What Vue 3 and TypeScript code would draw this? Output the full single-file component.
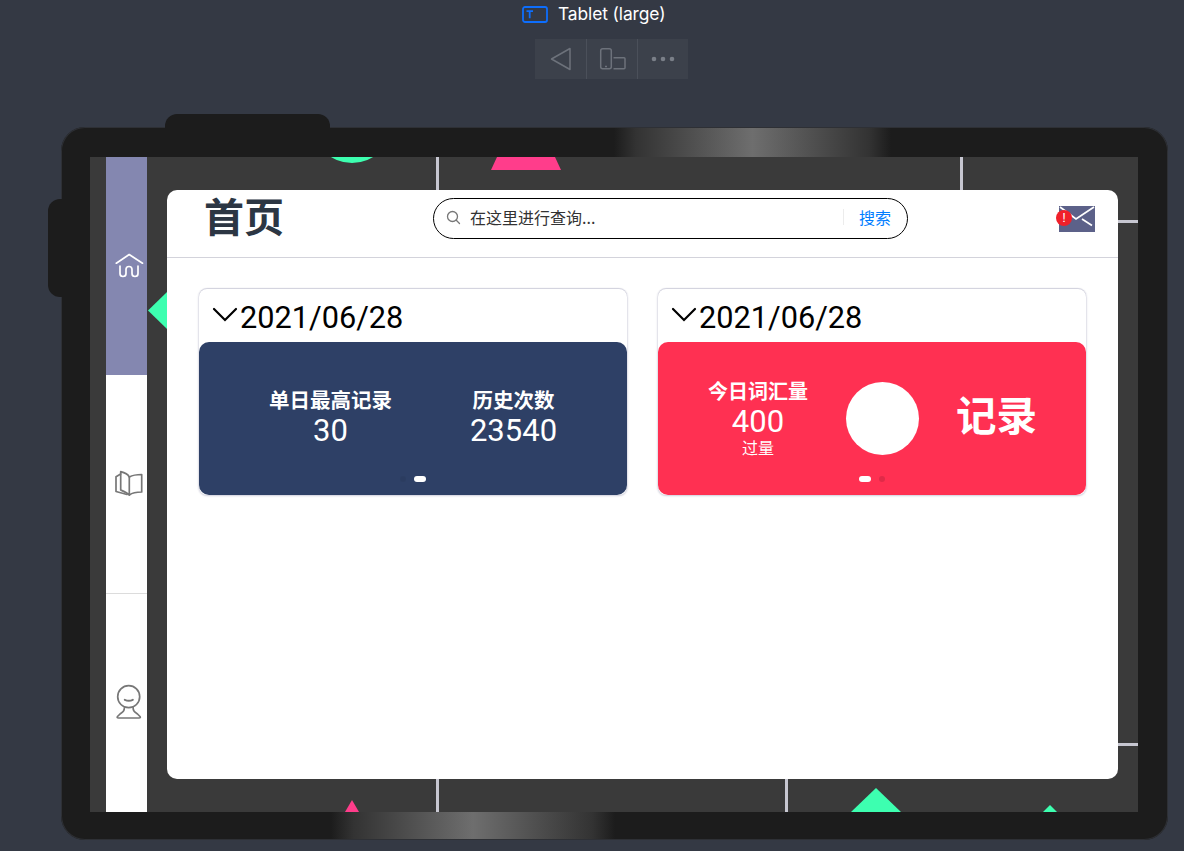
<script setup lang="ts">
const decorations: { cls: string }[] = [
  { cls: 'circle-top' }, { cls: 'tri-pink-top' }, { cls: 'line-v l1' }, { cls: 'line-v l2' },
  { cls: 'line-v l3' }, { cls: 'line-v l4' }, { cls: 'line-h h1' }, { cls: 'line-h h2' },
  { cls: 'tri-left' }, { cls: 'tri-pink-bottom' }, { cls: 'tri-big' }, { cls: 'tri-small' },
]
</script>

<template>
  <div class="page">
    <div class="title-row">
      <svg class="tablet-icon" width="26" height="17" viewBox="0 0 26 17">
        <rect x="1" y="1" width="24" height="15" rx="2" fill="none" stroke="#0d6efd" stroke-width="1.8" />
        <path d="M4.500 5.200h6.500M7.700 5.200v7" fill="none" stroke="#0d6efd" stroke-width="1.8" />
      </svg>
      <span class="title-text">Tablet (large)</span>
    </div>
    <div class="toolbar">
      <div class="tool">
        <svg width="24" height="26" viewBox="0 0 24 26"><path d="M21 2.500V23.500L2.500 13Z" fill="none" stroke="#6d727b" stroke-width="1.5" stroke-linejoin="round" /></svg>
      </div>
      <div class="tool">
        <svg width="28" height="24" viewBox="0 0 28 24"><rect x="2.700" y="1.700" width="10.600" height="20" rx="2" fill="none" stroke="#6d727b" stroke-width="1.5" /><path d="M7 19.600h2" stroke="#6d727b" stroke-width="1.5" /><path d="M15.500 10.700H26a1 1 0 0 1 1 1v9a1 1 0 0 1-1 1H15.500" fill="none" stroke="#6d727b" stroke-width="1.5" /></svg>
      </div>
      <div class="tool last">
        <svg width="26" height="6" viewBox="0 0 26 6"><circle cx="4" cy="3" r="2.300" fill="#7a7f88" /><circle cx="13" cy="3" r="2.300" fill="#7a7f88" /><circle cx="22" cy="3" r="2.300" fill="#7a7f88" /></svg>
      </div>
    </div>

    <div class="device">
      <div class="btn-top"></div>
      <div class="btn-left"></div>
      <div class="shine shine-top"></div>
      <div class="shine shine-bottom"></div>
      <div class="screen">
        <div v-for="d in decorations" :key="d.cls" :class="d.cls"></div>
        <nav class="rail">
          <div class="tab active">
            <svg width="30" height="30" viewBox="0 0 30 30" fill="none" stroke="#fff" stroke-width="1.7" stroke-linecap="round" stroke-linejoin="round">
              <path d="M2.300 12.200L15.200 3.500 28.500 12.200" />
              <path d="M6 15v7.500a3 3 0 0 0 3 3 3 3 0 0 0 3-3v-4a3 3 0 0 1 6 0v4a3 3 0 0 0 3 3 3 3 0 0 0 3-3V15" />
            </svg>
          </div>
          <div class="tab">
            <svg width="30" height="30" viewBox="0 0 30 30" fill="none" stroke="#777" stroke-width="1.7" stroke-linecap="round" stroke-linejoin="round">
              <path d="M15.300 8C18 6.500 23 5.500 27.700 5.500V23C23 23 18 24 15.300 26" />
              <path d="M6.700 2.700C10 3.500 14 5.500 15.300 8V26C13 23.500 9 22 6.700 21Z" />
              <path d="M6.700 5L2 7.700V22.500L13 25.500" />
            </svg>
          </div>
          <div class="tab">
            <svg width="30" height="38" viewBox="0 0 30 38" fill="none" stroke="#777" stroke-width="1.7" stroke-linecap="round" stroke-linejoin="round">
              <circle cx="14.700" cy="12.700" r="11" />
              <path d="M10.800 15.800q4 2 8 0" stroke-width="2" />
              <path d="M10.500 22.800C10.500 27 9 28 6 30L3.500 32.500Q2.500 34 4.500 34H25Q27 34 26 32.500L23.500 30C20.500 28 19 27 19 22.800" />
            </svg>
          </div>
        </nav>

        <main class="panel">
          <header class="panel-head">
            <h1 class="heading">首页</h1>
            <div class="search">
              <svg width="15" height="15" viewBox="0 0 15 15" fill="none" stroke="#777" stroke-width="1.300" stroke-linecap="round"><circle cx="6.500" cy="6.500" r="5" /><path d="M10.300 10.300l3.200 3.200" /></svg>
              <span class="placeholder">在这里进行查询...</span>
              <span class="search-sep"></span>
              <span class="search-btn">搜索</span>
            </div>
            <div class="mail">
              <svg width="36" height="26" viewBox="0 0 36 26">
                <rect width="36" height="26" fill="#5c6189" />
                <path d="M1 1L17 13L35 1M23 13L33 19.500" fill="none" stroke="#fff" stroke-width="1.700" />
              </svg>
              <span class="badge">!</span>
            </div>
          </header>

          <div class="cards">
            <section class="card">
              <div class="date">
                <svg width="26" height="16" viewBox="0 0 26 16" fill="none" stroke="#000" stroke-width="2.200" stroke-linecap="round"><path d="M2 2l11 11L24 2" /></svg>
                <span>2021/06/28</span>
              </div>
              <div class="body blue">
                <div class="stats-two">
                  <div class="stat">
                    <div class="label">单日最高记录</div>
                    <div class="value">30</div>
                  </div>
                  <div class="stat">
                    <div class="label">历史次数</div>
                    <div class="value">23540</div>
                  </div>
                </div>
                <div class="dots">
                  <span class="dot faint"></span><span class="dot on"></span>
                </div>
              </div>
            </section>

            <section class="card">
              <div class="date">
                <svg width="26" height="16" viewBox="0 0 26 16" fill="none" stroke="#000" stroke-width="2.200" stroke-linecap="round"><path d="M2 2l11 11L24 2" /></svg>
                <span>2021/06/28</span>
              </div>
              <div class="body red">
                <div class="stats-red">
                  <div class="stat narrow">
                    <div class="label">今日词汇量</div>
                    <div class="value">400</div>
                    <div class="unit">过量</div>
                  </div>
                  <div class="disc"></div>
                  <div class="record">记录</div>
                </div>
                <div class="dots">
                  <span class="dot on"></span><span class="dot dim"></span>
                </div>
              </div>
            </section>
          </div>
        </main>
      </div>
    </div>
  </div>
</template>

<style>
html, body { margin: 0; background: #343944; overflow: hidden; }
</style>

<style scoped>
.page {
  width: 1184px;
  height: 851px;
  background: #343944;
  overflow: hidden;
  font-family: "Noto Sans CJK SC", sans-serif;
  box-sizing: border-box;
  padding-top: 5px;
}
.title-row {
  display: flex;
  align-items: center;
  height: 18px;
  padding-left: 522px;
  gap: 10px;
}
.title-text {
  font: 17.400px/18px Inter, "Liberation Sans", sans-serif;
  color: #fff;
  letter-spacing: -0.1px;
}
.toolbar {
  display: flex;
  width: 153px;
  height: 40px;
  margin: 16px 0 0 535px;
  background: #3c414b;
}
.tool {
  width: 51px;
  display: flex;
  align-items: center;
  justify-content: center;
  border-right: 1px solid #4b505a;
  box-sizing: border-box;
}
.tool:first-child { width: 52px; }
.tool.last { width: 50px; border-right: none; }
.device {
  position: relative;
  width: 1107px;
  height: 713px;
  margin: 48px 0 0 61px;
  box-sizing: border-box;
  padding: 30px 30px 28px 29px;
  background: #1c1c1c;
  border-radius: 24px;
  box-shadow: inset 0 0 0 1px #2e3035;
}
.btn-top {
  position: absolute;
  left: 104px;
  top: -13px;
  width: 165px;
  height: 14px;
  background: #1c1c1c;
  border-radius: 12px 12px 0 0;
}
.btn-left {
  position: absolute;
  left: -13px;
  top: 72px;
  width: 14px;
  height: 98px;
  background: #1c1c1c;
  border-radius: 12px 0 0 12px;
}
.shine {
  position: absolute;
  height: 29px;
  background: linear-gradient(90deg, #1c1c1c 0%, #333 8%, #6e6e6e 50%, #333 92%, #1c1c1c 100%);
}
.shine-top { left: 553px; top: 1px; width: 277px; }
.shine-bottom { left: 270px; bottom: 1px; width: 284px; height: 27px; }
.screen {
  position: relative;
  display: flex;
  width: 1048px;
  height: 655px;
  padding-left: 16px;
  box-sizing: border-box;
  background: #3a3a3a;
  overflow: hidden;
}
.rail {
  position: relative;
  width: 41px;
  display: flex;
  flex-direction: column;
  background: #fff;
  flex: none;
}
.tab {
  flex: 1;
  display: flex;
  align-items: center;
  justify-content: center;
  padding-left: 5px;
  border-bottom: 1px solid #dcdcdc;
  box-sizing: border-box;
}
.tab:last-child { border-bottom: none; }
.tab.active { background: #8487b0; border-bottom: none; }
.panel {
  position: relative;
  width: 951px;
  height: 589px;
  margin: 33px 0 0 20px;
  background: #fff;
  border-radius: 10px;
  flex: none;
}
.panel-head {
  display: grid;
  grid-template-columns: 266px 475px 1fr;
  align-items: start;
  height: 68px;
  box-sizing: border-box;
  border-bottom: 1px solid #d3d3db;
}
.heading {
  margin: 0 0 0 37px;
  font-size: 40px;
  line-height: 50px;
  font-weight: 700;
  color: #2c3643;
}
.search {
  display: flex;
  align-items: center;
  height: 41px;
  box-sizing: border-box;
  padding: 0 0 3px 12px;
  border: 1px solid #000;
  border-radius: 21px;
  margin-top: 8px;
}
.placeholder {
  margin-left: 9px;
  width: 373px;
  font-size: 16px;
  color: #333;
}
.search-sep {
  width: 1px;
  height: 16px;
  background: #ececec;
}
.search-btn {
  margin-left: 15px;
  font-size: 16px;
  color: #007dff;
}
.mail {
  position: relative;
  justify-self: end;
  margin-right: 23px;
  margin-top: 16px;
  height: 26px;
}
.mail svg { display: block; }
.badge {
  position: absolute;
  left: -3px;
  top: 4px;
  width: 16px;
  height: 16px;
  border-radius: 50%;
  background: #f0202a;
  color: #fff;
  font: 400 13px/16px "Liberation Sans", sans-serif;
  text-align: center;
}
.cards {
  display: grid;
  grid-template-columns: 428px 428px;
  column-gap: 31px;
  padding: 31px 32px 0;
}
.card {
  border-radius: 8px;
  background: #fff;
  box-shadow: 0 -1px 1px rgba(70, 70, 120, 0.2), 0 1px 2px rgba(70, 70, 120, 0.22), 1px 0 2px rgba(70, 70, 120, 0.08), -1px 0 2px rgba(70, 70, 120, 0.08);
  height: 206px;
  display: flex;
  flex-direction: column;
}
.date {
  display: flex;
  align-items: center;
  height: 53px;
  padding-left: 13px;
  gap: 2px;
  font: 30.700px/53px Roboto, sans-serif;
  color: #000;
}
.date svg { margin-top: -2px; }
.date span { margin-top: 4px; }
.body {
  position: relative;
  flex: 1;
  border-radius: 10px;
  color: #fff;
}
.blue { background: #2e4066; }
.red { background: #ff3052; }
.stats-two {
  display: flex;
  justify-content: center;
  padding: 42px 0 0 18px;
}
.stats-two .stat { width: 183px; }
.stats-two .value { margin-top: 2px; }
.stat { text-align: center; }
.label { font-size: 20.500px; font-weight: 700; line-height: 30px; white-space: nowrap; }
.value { font: 31px/30px Roboto, sans-serif; }
.unit { font-size: 16px; line-height: 24px; margin-top: -2px; }
.stats-red {
  display: flex;
  align-items: flex-start;
  padding: 34px 0 0 50px;
  column-gap: 38px;
}
.stat.narrow { width: 100px; }
.stat.narrow .label { font-size: 20px; }
.stat.narrow .value { margin-top: 1px; }
.disc {
  width: 73px;
  height: 73px;
  margin-top: 6px;
  border-radius: 50%;
  background: #fff;
}
.record {
  font-size: 40.500px;
  font-weight: 700;
  line-height: 60px;
  margin-top: 8px;
  margin-left: -1px;
}
.dots {
  position: absolute;
  left: 0;
  right: 0;
  top: 134px;
  display: flex;
  justify-content: center;
  gap: 8px;
}
.dot { height: 6px; border-radius: 3px; }
.dot.on { width: 12px; background: #fff; }
.dot.faint { width: 6px; background: rgba(0, 0, 0, 0.05); }
.dot.dim { width: 6px; background: rgba(0, 0, 0, 0.12); }

.circle-top, .tri-pink-top, .tri-left, .tri-pink-bottom, .tri-big, .tri-small, .line-v, .line-h { position: absolute; }
.circle-top {
  left: 222px;
  top: -74px;
  width: 80px;
  height: 80px;
  border-radius: 50%;
  background: #3dffb0;
}
.tri-pink-top {
  left: 401px;
  top: 0;
  width: 70px;
  height: 13px;
  background: #ff3d8b;
  clip-path: polygon(6px 0, 64px 0, 70px 13px, 0 13px);
}
.tri-left {
  left: 58px;
  top: 135px;
  width: 19px;
  height: 37px;
  background: #3dffb0;
  clip-path: polygon(100% 0, 100% 100%, 0 50%);
}
.tri-pink-bottom {
  left: 255px;
  top: 643px;
  width: 14px;
  height: 12px;
  background: #ff3d8b;
  clip-path: polygon(50% 0, 100% 100%, 0 100%);
}
.tri-big {
  left: 761px;
  top: 631px;
  width: 50px;
  height: 24px;
  background: #3dffb0;
  clip-path: polygon(50% 0, 100% 100%, 0 100%);
}
.tri-small {
  left: 953px;
  top: 648px;
  width: 14px;
  height: 7px;
  background: #3dffb0;
  clip-path: polygon(50% 0, 100% 100%, 0 100%);
}
.line-v { width: 3px; height: 33px; background: #c7c7d1; }
.l1 { left: 346px; top: 0; }
.l2 { left: 870px; top: 0; }
.l3 { left: 346px; bottom: 0; }
.l4 { left: 695px; bottom: 0; }
.line-h { right: 0; width: 20px; height: 3px; background: #c7c7d1; }
.h1 { top: 63px; }
.h2 { top: 586px; }
</style>
